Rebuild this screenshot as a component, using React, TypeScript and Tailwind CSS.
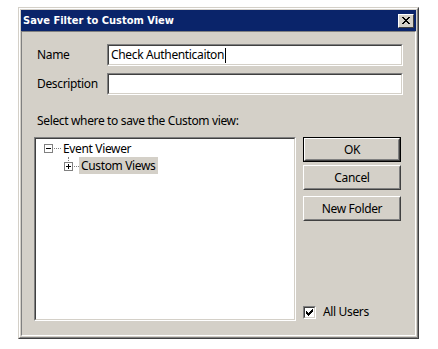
export default function App() {
  const body = "font-['Noto_Sans',sans-serif] text-[12px] leading-[16px] tracking-[-0.35px] text-black";
  return (
    <div className={`w-[438px] h-[349px] bg-white pl-[18px] pt-[7px] ${body}`}>
      {/* window frame outer */}
      <div className="w-[401px] h-[332px] border border-t-[#d4d0c8] border-l-[#d4d0c8] border-b-[#404040] border-r-[#404040]">
        <div className="h-full border border-t-white border-l-white border-b-[#808080] border-r-[#808080] bg-[#d4d0c8] p-px flex flex-col">
          {/* Title bar */}
          <div className="h-[21px] bg-[#0a246a] flex items-center justify-between pl-[2px] pr-[2px]">
            <span className="font-['DejaVu_Sans_Condensed','DejaVu_Sans',sans-serif] font-bold text-[11px] leading-[13px] text-white tracking-normal">
              Save Filter to Custom View
            </span>
            <div className="w-[16px] h-[14px] border border-t-white border-l-white border-b-[#404040] border-r-[#404040] bg-[#d4d0c8] flex items-center justify-center">
              <svg width="8" height="7" viewBox="0 0 8 7" shapeRendering="crispEdges">
                <path d="M0 0h2v1H0zM6 0h2v1H6zM1 1h2v1H1zM5 1h2v1H5zM2 2h4v1H2zM3 3h2v1H3zM2 4h4v1H2zM1 5h2v1H1zM5 5h2v1H5zM0 6h2v1H0zM6 6h2v1H6z" fill="#000" />
              </svg>
            </div>
          </div>
          {/* Content panel */}
          <div className="flex-1 border border-t-[#808080] border-l-[#808080] border-b-white border-r-white px-[12px] pt-[12px] pb-[14px] flex flex-col">
            <div className="flex items-center h-[22px]">
              <div className="w-[73px] pl-[3px]">Name</div>
              <div className="flex-1 h-[22px] border border-t-[#808080] border-l-[#808080] border-b-white border-r-white">
                <div className="h-full border border-t-[#404040] border-l-[#404040] border-b-[#d4d0c8] border-r-[#d4d0c8] bg-white flex items-center pl-[2px]">
                  <span>Check Authenticaiton</span>
                  <span className="w-px h-[15px] bg-black ml-[1px]" />
                </div>
              </div>
            </div>
            <div className="flex items-center h-[22px] mt-[7px]">
              <div className="w-[73px] pl-[3px]">Description</div>
              <div className="flex-1 h-[22px] border border-t-[#808080] border-l-[#808080] border-b-white border-r-white">
                <div className="h-full border border-t-[#404040] border-l-[#404040] border-b-[#d4d0c8] border-r-[#d4d0c8] bg-white" />
              </div>
            </div>
            <div className="mt-[18px] pl-[3px]">Select where to save the Custom view:</div>
            <div className="mt-[8px] flex flex-1 gap-[7px]">
              {/* Tree */}
              <div className="w-[262px] border border-t-[#808080] border-l-[#808080] border-b-white border-r-white">
                <div className="h-full border border-t-[#404040] border-l-[#404040] border-b-[#d4d0c8] border-r-[#d4d0c8] bg-white pl-[8px] pt-px">
                  <div className="flex items-center h-[17px]">
                    <div className="w-[9px] h-[9px] border border-[#808080] bg-white flex items-center justify-center">
                      <div className="w-[5px] h-px bg-black" />
                    </div>
                    <div className="w-[7px] border-t border-dotted border-[#808080] ml-px" />
                    <span className="ml-[2px]">Event Viewer</span>
                  </div>
                  <div className="flex h-[17px] ml-[20px] relative">
                    <div className="absolute left-[4px] top-0 h-[6px] border-l border-dotted border-[#808080]" />
                    <div className="flex items-center mt-[2px]">
                      <div className="w-[9px] h-[9px] border border-[#808080] bg-white relative flex items-center justify-center">
                        <div className="w-[5px] h-px bg-black" />
                        <div className="absolute w-px h-[5px] bg-black" />
                      </div>
                      <div className="w-[5px] border-t border-dotted border-[#808080] ml-px" />
                    </div>
                    <span className="bg-[#d4d0c8] px-[2px] h-[17px] flex items-center">Custom Views</span>
                  </div>
                </div>
              </div>
              {/* Buttons */}
              <div className="w-[98px] flex flex-col">
                <div className="h-[25px] border border-black">
                  <div className="h-full border border-t-white border-l-white border-b-[#404040] border-r-[#404040]">
                    <div className="h-full border border-transparent border-b-[#808080] border-r-[#808080] flex items-center justify-center">OK</div>
                  </div>
                </div>
                <div className="h-[25px] mt-[3px] border border-t-white border-l-white border-b-[#404040] border-r-[#404040]">
                  <div className="h-full border border-transparent border-b-[#808080] border-r-[#808080] flex items-center justify-center">Cancel</div>
                </div>
                <div className="h-[25px] mt-[6px] border border-t-white border-l-white border-b-[#404040] border-r-[#404040]">
                  <div className="h-full border border-transparent border-b-[#808080] border-r-[#808080] flex items-center justify-center">New Folder</div>
                </div>
                <div className="mt-auto mb-px flex items-center">
                  <div className="w-[13px] h-[13px] border border-t-[#808080] border-l-[#808080] border-b-white border-r-white">
                    <div className="h-full border border-t-[#404040] border-l-[#404040] border-b-[#d4d0c8] border-r-[#d4d0c8] bg-white flex items-center justify-center">
                      <svg width="7" height="7" viewBox="0 0 7 7" shapeRendering="crispEdges">
                        <path d="M6 0h1v3H6zM5 1h1v3H5zM4 2h1v3H4zM3 3h1v3H3zM2 4h1v3H2zM1 3h1v3H1zM0 2h1v3H0z" fill="#000" />
                      </svg>
                    </div>
                  </div>
                  <span className="ml-[7px]">All Users</span>
                </div>
              </div>
            </div>
          </div>
        </div>
      </div>
    </div>
  );
}
